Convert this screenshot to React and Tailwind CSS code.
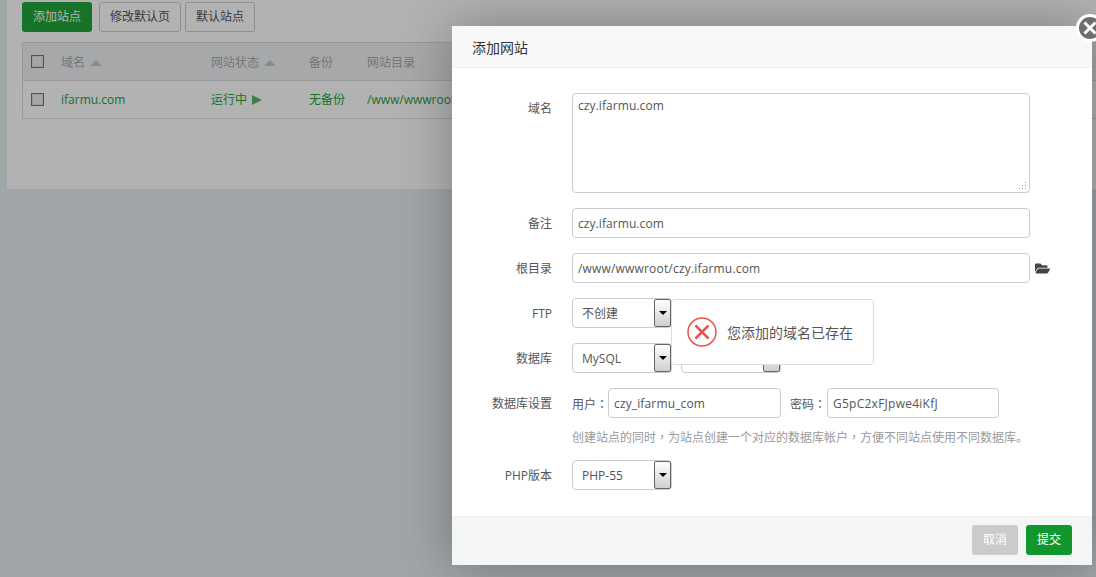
import React from "react";
import { FaFolderOpen } from "react-icons/fa";

const font = { fontFamily: '"Open Sans", "Noto Sans CJK SC", sans-serif' };

const inputClass =
  "h-[30px] border border-[#ccc] rounded-[4px] px-[5px] text-[#555] text-[12px] bg-white outline-none";

const checkClass =
  "appearance-none ml-[8px] w-[13px] h-[13px] border border-[#777] bg-[#eee] shadow-[inset_0_0_0_1px_#ddd]";

const labelClass = "h-[30px] shrink-0 leading-[32px] text-[12px] text-[#555] whitespace-nowrap";

function SortArrow() {
  return <span className="ml-[5px] inline-block w-0 h-0 border-x-[6px] border-x-transparent border-b-[6px] border-b-[#c4c4c4]" />;
}

// centred full-width punctuation, as in the original's font
function Punct({ children }) {
  return <span className="font-['Noto_Sans_CJK_TC']">{children}</span>;
}

function Select({ value, className }) {
  return (
    <div className={`relative h-[30px] bg-white border border-[#ccc] rounded-[4px] ${className}`}>
      <select
        defaultValue={value}
        className="appearance-none w-full h-full pl-[9px] pt-px bg-transparent text-[12px] text-[#555] outline-none"
      >
        <option>{value}</option>
      </select>
      <div className="absolute right-0 top-0 bottom-0 w-[17px] border border-[#666] rounded-[2px] bg-gradient-to-b from-white to-[#cfcfcf] flex items-center justify-center pointer-events-none">
        <span className="w-0 h-0 border-x-[4px] border-x-transparent border-t-[4px] border-t-black" />
      </div>
    </div>
  );
}

function Row({ label, children, className = "mb-[15px]" }) {
  return (
    <div className={`flex ${className}`}>
      <label className={`${labelClass} w-[100px] text-right`}>{label}</label>
      <div className="ml-[20px] flex items-start">{children}</div>
    </div>
  );
}

function SiteList() {
  return (
    <div className="ml-[7px] h-[189px] bg-white pt-[2px] pl-[15px]">
      <div className="flex gap-[7px]">
        <button className="h-[30px] w-[70px] rounded-[3px] bg-[#20a53a] text-white text-[12px]">添加站点</button>
        <button className="h-[30px] w-[82px] rounded-[3px] border border-[#ccc] bg-white text-[#555] text-[12px]">修改默认页</button>
        <button className="h-[30px] w-[70px] -ml-[3px] rounded-[3px] border border-[#ccc] bg-white text-[#555] text-[12px]">默认站点</button>
      </div>
      <div className="mt-[10px] border border-[#ddd] w-[1200px] text-[12px]">
        <div className="grid grid-cols-[38px_150px_98px_58px_1fr] h-[38px] pt-[3px] items-center bg-[#eef1f4] border-b border-[#ddd] text-[#aaa]">
          <input type="checkbox" className={`${checkClass} -mt-[4px]`} />
          <div className="flex items-center">域名<SortArrow /></div>
          <div className="flex items-center">网站状态<SortArrow /></div>
          <div>备份</div>
          <div>网站目录</div>
        </div>
        <div className="grid grid-cols-[38px_150px_98px_58px_1fr] h-[37px] items-center text-[#20a53a]">
          <input type="checkbox" className={checkClass} />
          <div>ifarmu.com</div>
          <div className="flex items-center">
            运行中
            <span className="ml-[5px] inline-block w-0 h-0 border-y-[5.5px] border-y-transparent border-l-[10px] border-l-[#5cb36c]" />
          </div>
          <div>无备份</div>
          <div>/www/wwwroot/ifarmu.com</div>
        </div>
      </div>
    </div>
  );
}

function CloseButton() {
  return (
    <div className="absolute -top-[12px] -right-[12px] w-[28px] h-[28px] rounded-full border-[3px] border-white bg-[#6e6e6e] flex items-center justify-center">
      <svg width="14" height="14" viewBox="0 0 14 14" fill="none" stroke="white" strokeWidth="3">
        <path d="M1.5 1.5 12.5 12.5M12.5 1.5 1.5 12.5" />
      </svg>
    </div>
  );
}

function Toast() {
  return (
    <div className="absolute left-[219px] top-[273px] w-[203px] h-[66px] bg-white border border-[#ddd] rounded-[3px] flex items-center pl-[15px]">
      <svg width="30" height="30" viewBox="0 0 30 30" fill="none" stroke="#e8574e">
        <circle cx="15" cy="15" r="14" strokeWidth="1.5" />
        <path d="M8.5 8.5 21.5 21.5M21.5 8.5 8.5 21.5" strokeWidth="2.5" />
      </svg>
      <span className="ml-[10px] text-[14px] text-[#555] whitespace-nowrap">您添加的域名已存在</span>
    </div>
  );
}

function AddSiteModal() {
  return (
    <div className="absolute left-[452px] top-[26px] w-[640px] h-[539px] bg-white shadow-[1px_1px_50px_rgba(0,0,0,0.3)] flex flex-col">
      <CloseButton />
      <div className="h-[42px] shrink-0 bg-[#f8f8f8] border-b border-[#eee] pl-[20px] leading-[43px] text-[14px] text-[#333]">
        添加网站
      </div>
      <div className="flex-1 pt-[25px]">
        <Row label="域名">
          <div className="relative">
            <textarea
              defaultValue="czy.ifarmu.com"
              className="block resize-none w-[458px] h-[100px] border border-[#ccc] rounded-[4px] px-[5px] py-[3px] text-[#555] text-[12px] tracking-[0.07px] leading-[18px] outline-none"
            />
            {/* resize grip */}
            <svg className="absolute right-[3px] bottom-[3px]" width="8" height="8" viewBox="0 0 8 8" fill="#999">
              <rect x="6" y="0" width="1" height="1" />
              <rect x="3" y="3" width="1" height="1" />
              <rect x="6" y="3" width="1" height="1" />
              <rect x="0" y="6" width="1" height="1" />
              <rect x="3" y="6" width="1" height="1" />
              <rect x="6" y="6" width="1" height="1" />
            </svg>
          </div>
        </Row>
        <Row label="备注">
          <input defaultValue="czy.ifarmu.com" className={`${inputClass} w-[458px] tracking-[0.07px]`} />
        </Row>
        <Row label="根目录">
          <input defaultValue="/www/wwwroot/czy.ifarmu.com" className={`${inputClass} w-[458px] tracking-[0.18px]`} />
          <FaFolderOpen className="ml-[5px] mt-[8px] text-[#444] text-[15px]" />
        </Row>
        <Row label="FTP">
          <Select value="不创建" className="w-[100px]" />
        </Row>
        <Row label="数据库">
          <Select value="MySQL" className="w-[100px]" />
          <Select value="" className="w-[100px] ml-[9px]" />
        </Row>
        <Row label="数据库设置" className="mb-[4px]">
          <span className={`${labelClass} w-[36px]`}>用户<Punct>：</Punct></span>
          <input defaultValue="czy_ifarmu_com" className={`${inputClass} w-[173px] tracking-[0.14px]`} />
          <span className={`${labelClass} ml-[9px] w-[37px]`}>密码<Punct>：</Punct></span>
          <input defaultValue="G5pC2xFJpwe4iKfJ" className={`${inputClass} w-[172px] tracking-[0.25px]`} />
        </Row>
        <p className="ml-[120px] h-[38px] leading-[30px] text-[12px] text-[#999] whitespace-nowrap">
          创建站点的同时<Punct>，</Punct>为站点创建一个对应的数据库帐户<Punct>，</Punct>方便不同站点使用不同数据库。
        </p>
        <Row label="PHP版本" className="">
          <Select value="PHP-55" className="w-[100px]" />
        </Row>
      </div>
      <div className="h-[49px] shrink-0 bg-[#f4f6f6] border-t border-[#eee] flex items-start justify-end gap-[8px] pt-[8px] pr-[20px]">
        <button className="w-[46px] h-[30px] rounded-[3px] bg-[#cbcbcb] text-white text-[12px]">取消</button>
        <button className="w-[46px] h-[30px] rounded-[3px] bg-[#12972f] text-white text-[12px]">提交</button>
      </div>
      <Toast />
    </div>
  );
}

export default function App() {
  return (
    <div className="relative w-[1096px] h-[577px] overflow-hidden bg-[#e6ecf0]" style={font}>
      <SiteList />
      <div className="absolute inset-0 bg-black/30" />
      <AddSiteModal />
    </div>
  );
}
